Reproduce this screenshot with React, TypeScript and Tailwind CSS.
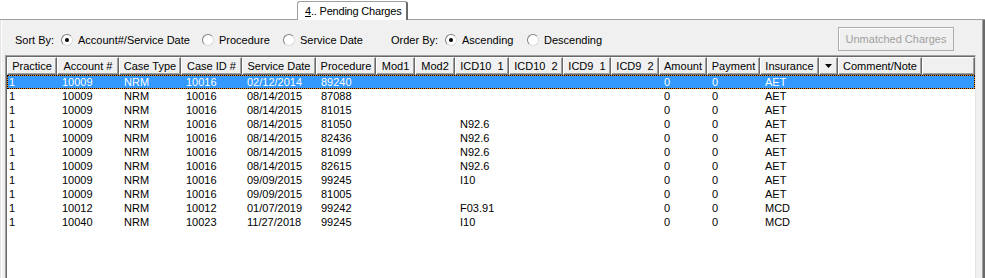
import React from "react";

type Col = { key: string; label: string; w: string; pad: string };

const cols: Col[] = [
  { key: "practice", label: "Practice", w: "w-[50px]", pad: "pl-[1px]" },
  { key: "account", label: "Account #", w: "w-[62px]", pad: "pl-[5px]" },
  { key: "caseType", label: "Case Type", w: "w-[62px]", pad: "pl-[5px]" },
  { key: "caseId", label: "Case ID #", w: "w-[61px]", pad: "pl-[5px]" },
  { key: "date", label: "Service Date", w: "w-[74px]", pad: "pl-[5px]" },
  { key: "proc", label: "Procedure", w: "w-[60px]", pad: "pl-[5px]" },
  { key: "mod1", label: "Mod1", w: "w-[39px]", pad: "pl-[5px]" },
  { key: "mod2", label: "Mod2", w: "w-[40px]", pad: "pl-[5px]" },
  { key: "icd101", label: "ICD10  1", w: "w-[54px]", pad: "pl-[5px]" },
  { key: "icd102", label: "ICD10  2", w: "w-[54px]", pad: "pl-[5px]" },
  { key: "icd91", label: "ICD9  1", w: "w-[48px]", pad: "pl-[5px]" },
  { key: "icd92", label: "ICD9  2", w: "w-[48px]", pad: "pl-[5px]" },
  { key: "amount", label: "Amount", w: "w-[48px]", pad: "pl-[5px]" },
  { key: "payment", label: "Payment", w: "w-[53px]", pad: "pl-[5px]" },
  { key: "ins", label: "Insurance", w: "w-[59px]", pad: "pl-[5px]" },
  { key: "drop", label: "", w: "w-[19px]", pad: "pl-[5px]" },
  { key: "comment", label: "Comment/Note", w: "w-[84px]", pad: "pl-[5px]" },
];

type Row = Record<string, string>;

const mk = (
  account: string,
  caseId: string,
  date: string,
  proc: string,
  icd: string,
  ins: string
): Row => ({
  practice: "1",
  account,
  caseType: "NRM",
  caseId,
  date,
  proc,
  icd101: icd,
  amount: "0",
  payment: "0",
  ins,
});

const rows: Row[] = [
  mk("10009", "10016", "02/12/2014", "89240", "", "AET"),
  mk("10009", "10016", "08/14/2015", "87088", "", "AET"),
  mk("10009", "10016", "08/14/2015", "81015", "", "AET"),
  mk("10009", "10016", "08/14/2015", "81050", "N92.6", "AET"),
  mk("10009", "10016", "08/14/2015", "82436", "N92.6", "AET"),
  mk("10009", "10016", "08/14/2015", "81099", "N92.6", "AET"),
  mk("10009", "10016", "08/14/2015", "82615", "N92.6", "AET"),
  mk("10009", "10016", "09/09/2015", "99245", "I10", "AET"),
  mk("10009", "10016", "09/09/2015", "81005", "", "AET"),
  mk("10012", "10012", "01/07/2019", "99242", "F03.91", "MCD"),
  mk("10040", "10023", "11/27/2018", "99245", "I10", "MCD"),
];

function Radio({ checked }: { checked?: boolean }) {
  return (
    <span className="w-[12px] h-[12px] shrink-0 rounded-full bg-white border border-t-[#808080] border-l-[#808080] border-r-[#dcdcdc] border-b-[#dcdcdc] flex items-center justify-center">
      {checked && <span className="w-[4px] h-[4px] rounded-full bg-black" />}
    </span>
  );
}

function Option({ w, label, checked }: { w: string; label: string; checked?: boolean }) {
  return (
    <div className={`${w} shrink-0 flex items-center gap-[5px] whitespace-nowrap`}>
      <Radio checked={checked} />
      <span>{label}</span>
    </div>
  );
}

const headCell =
  "shrink-0 h-full flex items-center justify-center whitespace-nowrap border-l border-t border-l-white border-t-white border-r border-b border-r-[#696969] border-b-[#696969] shadow-[inset_-1px_-1px_0_#a0a0a0]";

export default function App() {
  return (
    <div className="w-[985px] h-[278px] overflow-hidden bg-white flex flex-col text-[11px] leading-[14px] text-black font-['Liberation_Sans',Arial,sans-serif]">
      {/* Tab strip */}
      <div className="flex h-[20px] shrink-0">
        <div className="w-[297px] border-b border-b-[#a0a0a0]" />
        <div className="w-[111px] mt-[1px] bg-white rounded-t-[3px] border-l border-t border-l-[#a0a0a0] border-t-[#a0a0a0] border-r-2 border-r-[#696969] flex items-center pl-[7px] whitespace-nowrap tracking-[-0.2px]">
          <span className="underline">4</span>
          <span>.. Pending Charges</span>
        </div>
        <div className="flex-1 border-b border-b-[#a0a0a0]" />
      </div>

      {/* Panel */}
      <div className="flex-1 min-h-0 flex flex-col bg-[#f0f0f0] border-l border-l-[#e3e3e3] border-r-2 border-r-[#696969]">
        <div className="flex-1 min-h-0 flex flex-col border-l border-l-white border-r border-r-[#a0a0a0]">
          {/* Controls */}
          <div className="h-[35px] shrink-0 flex items-start">
            <div className="flex items-center h-[14px] mt-[13px] pl-[13px]">
              <div className="w-[46px] shrink-0">Sort By:</div>
              <Option w="w-[141px]" label="Account#/Service Date" checked />
              <Option w="w-[81px]" label="Procedure" />
              <Option w="w-[108px]" label="Service Date" />
              <div className="w-[54px] shrink-0 whitespace-nowrap">Order By:</div>
              <Option w="w-[82px]" label="Ascending" checked />
              <Option w="w-[90px]" label="Descending" />
            </div>
            <button
              disabled
              className="ml-auto mt-[7px] mr-[28px] w-[116px] h-[24px] shrink-0 bg-[#f0f0f0] border border-[#adadad] shadow-[inset_1px_1px_0_#ffffff] text-[#a0a0a0] flex items-center justify-center whitespace-nowrap"
            >
              Unmatched Charges
            </button>
          </div>

          {/* Grid */}
          <div className="flex-1 min-h-0 ml-[3px] mr-[6px] flex flex-col border-l border-t border-l-[#a0a0a0] border-t-[#a0a0a0] border-r border-r-[#e3e3e3]">
            <div className="flex-1 min-h-0 flex flex-col bg-white border-l border-t border-l-[#696969] border-t-[#696969]">
              {/* Header */}
              <div className="h-[18px] shrink-0 flex bg-[#f0f0f0]">
                {cols.map((c) => (
                  <div key={c.key} className={`${headCell} ${c.w}`}>
                    {c.key === "drop" ? (
                      <svg width="7" height="4" viewBox="0 0 7 4">
                        <polygon points="0,0 7,0 3.5,4" fill="#000" />
                      </svg>
                    ) : (
                      <span className="whitespace-pre">{c.label}</span>
                    )}
                  </div>
                ))}
                <div className={`${headCell} flex-1`} />
              </div>

              {/* Rows */}
              {rows.map((r, i) => {
                const sel = i === 0;
                return (
                  <div
                    key={i}
                    className={`h-[14px] shrink-0 flex border ${
                      sel ? "border-dotted border-black bg-[#f08c28]" : "border-transparent"
                    }`}
                  >
                    <div className={`flex-1 flex ${sel ? "bg-[#3399ff] text-white" : ""}`}>
                      {cols.map((c, ci) => (
                        <div
                          key={c.key}
                          className={`${ci === 0 ? "w-[49px]" : c.w} ${c.pad} shrink-0 leading-[12px] whitespace-nowrap overflow-hidden`}
                        >
                          {r[c.key] ?? ""}
                        </div>
                      ))}
                    </div>
                  </div>
                );
              })}
            </div>
          </div>
        </div>
      </div>
    </div>
  );
}
